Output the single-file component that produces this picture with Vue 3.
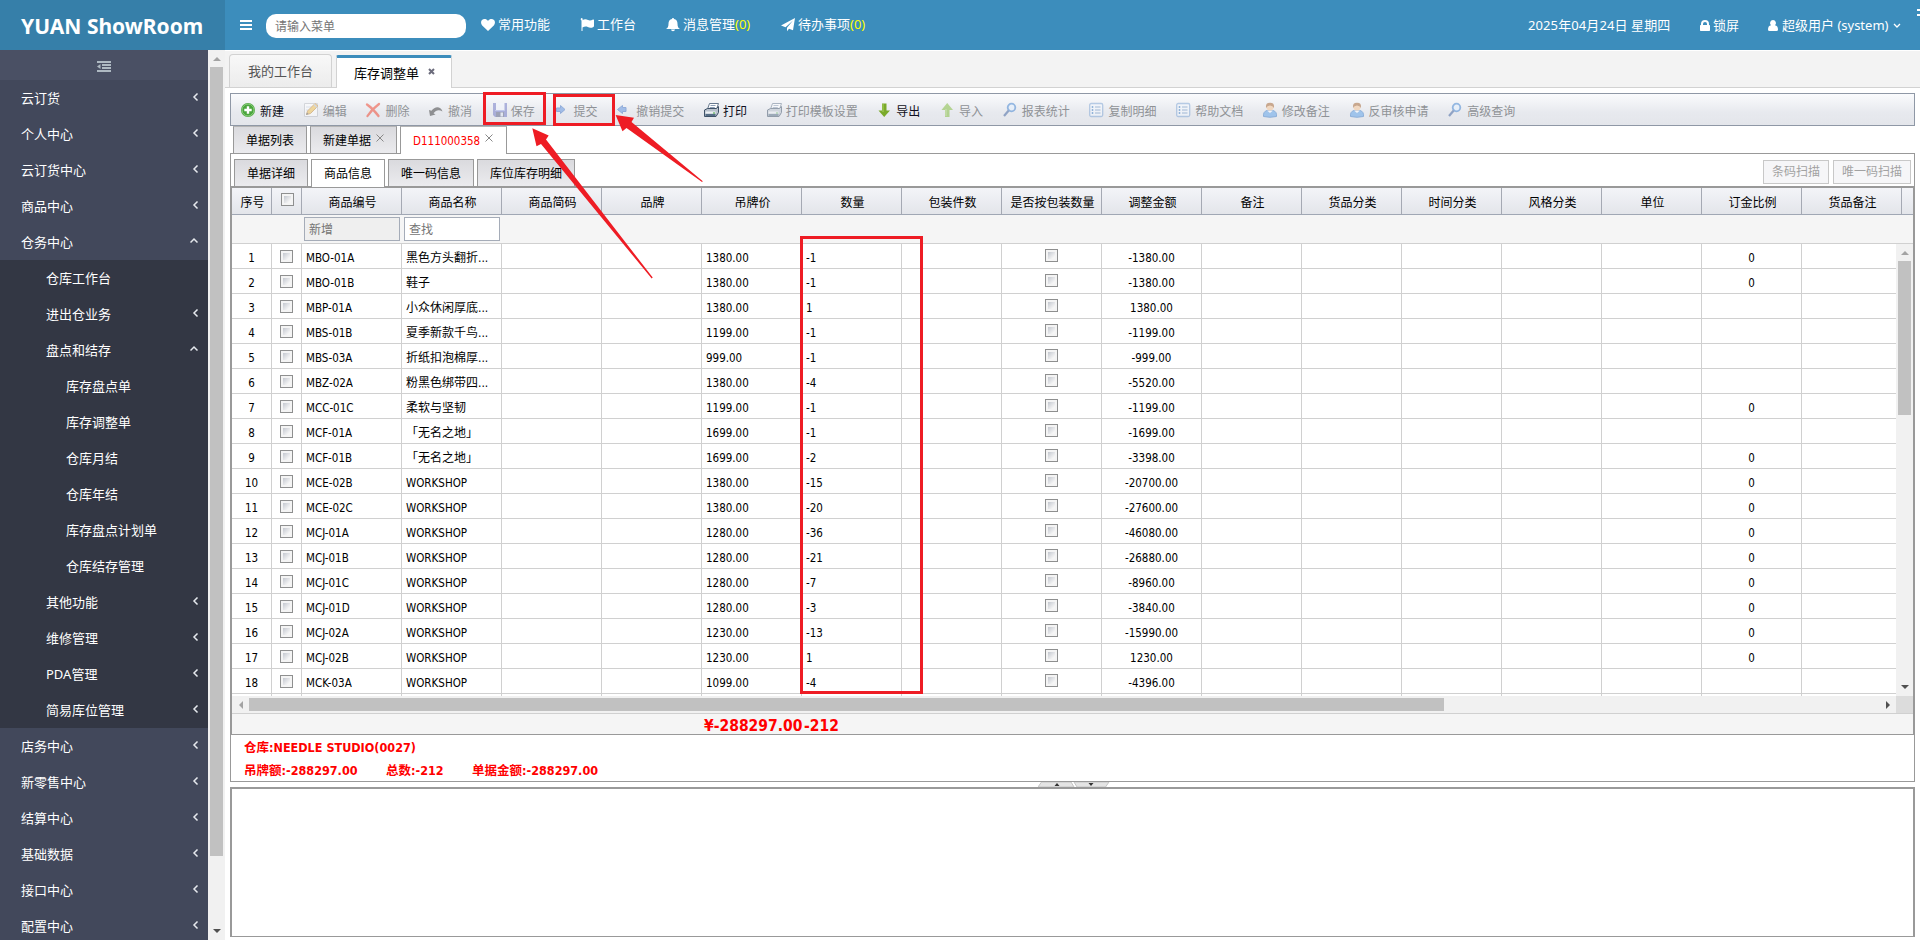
<template>
  <div class="app">
    <header class="topbar">
      <div class="logo">YUAN ShowRoom</div>
      <svg class="bars" viewBox="0 0 12 10"><path d="M0 0h12v2H0zM0 4h12v2H0zM0 8h12v2H0z" /></svg>
      <div class="menu-search">请输入菜单</div>
      <nav class="nav">
        <a v-for="n in navs" :key="n.text" :class="['nav-item', n.icon]">
          <svg class="nav-icon" viewBox="0 0 14 14"><path :d="glyphs[n.icon]" /></svg>
          <span>{{ n.text }}<em v-if="n.count">{{ n.count }}</em></span>
        </a>
      </nav>
      <div class="user-area">
        <span class="date">2025年04月24日 星期四</span>
        <span class="lock">
          <svg class="lock-icon" viewBox="0 0 10 12"><path fill-rule="evenodd" d="M1 5V4a4 4 0 0 1 8 0v1h.3q.7 0 .7.7v4.6q0 .7-.7.7H.7Q0 11 0 10.300V5.700Q0 5 .7 5zM3 5h4V4a2 2 0 0 0-4 0z" /></svg>
          锁屏
        </span>
        <span class="user">
          <svg class="user-icon" viewBox="0 0 10 12"><path d="M5 0a3 3 0 0 1 2 5.200Q10 5.800 10 9.500q0 1.500-1.500 1.500h-7Q0 11 0 9.500 0 5.800 3 5.200A3 3 0 0 1 5 0z" /></svg>
          超级用户 (system)
          <svg class="down-icon" viewBox="0 0 8 6"><path d="M1 1l3 3 3-3" /></svg>
        </span>
        <span class="edge-dots"></span>
      </div>
    </header>

    <div class="page">
      <aside class="sidebar">
        <div class="side-toggle">
          <svg viewBox="0 0 14 11"><path d="M0 0h14v2H0zM5 3h9v2H5zM5 6h9v2H5zM0 9h14v2H0zM0 5.500l3.500-2.500v5z" /></svg>
        </div>
        <ul class="menu">
          <li v-for="m in menus" :key="m.text" :class="['menu-item', 'level-' + m.level]">
            <span>{{ m.text }}</span>
            <svg v-if="m.arrow" :class="['chevron', m.arrow]" viewBox="0 0 8 8">
              <path :d="m.arrow === 'up' ? 'M0.500 5.500L4 2l3.500 3.500' : 'M5.500 0.500L2 4l3.500 3.500'" />
            </svg>
          </li>
        </ul>
      </aside>
      <div class="side-scroll">
        <i class="tri up"></i>
        <div class="side-thumb"></div>
        <i class="tri down dark"></i>
      </div>

      <main class="main">
        <div class="page-tabs">
          <div class="page-tab">我的工作台</div>
          <div class="page-tab active">
            库存调整单
            <svg viewBox="0 0 7 7"><path d="M1 1l5 5M6 1L1 6" /></svg>
          </div>
        </div>

        <div class="workspace">
          <div class="toolbar">
            <div v-for="t in tools" :key="t.text" :class="['tool', { disabled: !t.enabled }]">
              <svg class="tool-icon" viewBox="0 0 16 16" v-html="icons[t.icon]"></svg>
              <span>{{ t.text }}</span>
            </div>
          </div>

          <div class="doc-tabs">
            <div class="doc-tab">单据列表</div>
            <div class="doc-tab closable">新建单据<svg viewBox="0 0 8 8"><path d="M.5.5l7 7M7.500.5l-7 7" /></svg></div>
            <div class="doc-tab active">D111000358<svg viewBox="0 0 8 8"><path d="M.5.5l7 7M7.500.5l-7 7" /></svg></div>
          </div>

          <section class="detail">
            <div class="sub-bar">
              <div
                v-for="(s, i) in subTabs"
                :key="s"
                :class="['sub-tab', { active: i === 1 }]"
              >{{ s }}</div>
              <div class="scan-btns">
                <button>条码扫描</button>
                <button>唯一码扫描</button>
              </div>
            </div>

            <div class="grid">
              <div class="grid-head row">
                <div class="th">序号</div>
                <div class="th"><i class="check"></i></div>
                <div v-for="c in columns" :key="c" class="th">{{ c }}</div>
                <div class="th rest"></div>
              </div>
              <div class="filter">
                <div class="filter-input muted">新增</div>
                <div class="filter-input">查找</div>
              </div>
              <div class="grid-mid">
                <div class="grid-body">
                  <div v-for="(r, i) in rows" :key="i" class="row">
                    <div class="td center">{{ i + 1 }}</div>
                    <div class="td center"><i class="check"></i></div>
                    <div class="td">{{ r[0] }}</div>
                    <div :class="['td', { cjk: r[1] !== 'WORKSHOP' }]">{{ r[1] }}</div>
                    <div class="td"></div>
                    <div class="td"></div>
                    <div class="td">{{ r[2] }}</div>
                    <div class="td">{{ r[3] }}</div>
                    <div class="td"></div>
                    <div class="td center pack"><i class="check"></i></div>
                    <div class="td center">{{ r[4] }}</div>
                    <div v-for="k in 5" :key="k" class="td"></div>
                    <div class="td center">{{ r[5] ? '0' : '' }}</div>
                    <div class="td"></div>
                  </div>
                  <div class="row">
                    <div v-for="k in 18" :key="k" class="td"></div>
                  </div>
                </div>
                <div class="v-scroll">
                  <i class="tri up"></i>
                  <div class="v-thumb"></div>
                  <i class="tri down dark"></i>
                </div>
              </div>
              <div class="h-scroll">
                <i class="tri left"></i>
                <div class="h-thumb"></div>
                <i class="tri right dark"></i>
                <span class="corner"></span>
              </div>
              <div class="summary">
                <span class="sum-amount">¥-288297.00</span>
                <span class="sum-qty">-212</span>
              </div>
            </div>

            <div class="info">
              <p>仓库:NEEDLE STUDIO(0027)</p>
              <p>
                <span class="tag-total">吊牌额:-288297.00</span>
                <span class="count-total">总数:-212</span>
                <span>单据金额:-288297.00</span>
              </p>
            </div>
          </section>

          <div class="splitter">
            <svg viewBox="0 0 72 5">
              <path d="M3.500 0h29.500l3 5H0zM36 0h35l-3.500 5H39z" fill="#e4e4e4" stroke="#c4c4c4" />
              <path d="M19 1l2.500 3h-5zM53 4l2.500-3h-5z" fill="#333" />
            </svg>
          </div>
          <div class="lower-panel"></div>
        </div>
      </main>
    </div>

    <!-- 操作标注 -->
    <svg class="marks" viewBox="0 0 1920 940">
      <g fill="none" stroke="#ee1c24" stroke-width="3">
        <rect x="484.500" y="93.500" width="60" height="30" />
        <rect x="554.500" y="95.500" width="59" height="29" />
        <rect x="801.500" y="237.500" width="120" height="455" />
      </g>
      <g fill="#ee1c24">
        <path d="M532.300 128.300L548.700 135.600 546 139.500 652.700 277.500 651.700 278.500 541 144 536.500 146.300z" />
        <path d="M615.600 115L634 117.700 631.500 122 702.800 181.300 702 182 626.500 128 622.500 131.300z" />
      </g>
    </svg>
  </div>
</template>

<script setup>
const navs = [
  { icon: 'heart', text: '常用功能' },
  { icon: 'flag', text: '工作台' },
  { icon: 'bell', text: '消息管理', count: '(0)' },
  { icon: 'plane', text: '待办事项', count: '(0)' }
]

const glyphs = {
  heart: 'M7 13L1.200 7.400C-.3 5.800-.3 3.300 1 2 2.700.4 5.500.7 7 3 8.500.7 11.300.4 13 2c1.300 1.300 1.300 3.800-.2 5.400z',
  flag: 'M1.500 0a1.300 1.300 0 0 1 .9 2.200C4 1.200 6 .9 8 2c1.800.9 3.300.4 5-.5.600-.3 1 0 1 .5v6c0 .4-.2.7-.6.9-1.800 1-3.600 1.200-5.600.2-1.800-.9-3.600-.5-5.300.5V13h-1V2.400A1.300 1.300 0 0 1 1.500 0z',
  bell: 'M7 0c.6 0 1 .4 1 1.100 2.300.5 3.500 2.200 3.500 4.600 0 3 .9 4.300 2.500 5.300H0c1.600-1 2.500-2.300 2.500-5.300 0-2.400 1.200-4.100 3.500-4.600C6 .4 6.400 0 7 0zM5 11.500h4q-.2 1.800-2 1.800t-2-1.800z',
  plane: 'M14 0l-2 12.300-4-1.600L6 13.300V9.800L12 2.500 4.500 9.200 0 7.500z'
}

const menus = [
  { text: '云订货', level: 1, arrow: 'left' },
  { text: '个人中心', level: 1, arrow: 'left' },
  { text: '云订货中心', level: 1, arrow: 'left' },
  { text: '商品中心', level: 1, arrow: 'left' },
  { text: '仓务中心', level: 1, arrow: 'up' },
  { text: '仓库工作台', level: 2 },
  { text: '进出仓业务', level: 2, arrow: 'left' },
  { text: '盘点和结存', level: 2, arrow: 'up' },
  { text: '库存盘点单', level: 3 },
  { text: '库存调整单', level: 3 },
  { text: '仓库月结', level: 3 },
  { text: '仓库年结', level: 3 },
  { text: '库存盘点计划单', level: 3 },
  { text: '仓库结存管理', level: 3 },
  { text: '其他功能', level: 2, arrow: 'left' },
  { text: '维修管理', level: 2, arrow: 'left' },
  { text: 'PDA管理', level: 2, arrow: 'left' },
  { text: '简易库位管理', level: 2, arrow: 'left' },
  { text: '店务中心', level: 1, arrow: 'left' },
  { text: '新零售中心', level: 1, arrow: 'left' },
  { text: '结算中心', level: 1, arrow: 'left' },
  { text: '基础数据', level: 1, arrow: 'left' },
  { text: '接口中心', level: 1, arrow: 'left' },
  { text: '配置中心', level: 1, arrow: 'left' }
]

const tools = [
  { text: '新建', icon: 'add', enabled: true },
  { text: '编辑', icon: 'edit' },
  { text: '删除', icon: 'remove' },
  { text: '撤消', icon: 'undo' },
  { text: '保存', icon: 'save' },
  { text: '提交', icon: 'right' },
  { text: '撤销提交', icon: 'left' },
  { text: '打印', icon: 'print', enabled: true },
  { text: '打印模板设置', icon: 'print' },
  { text: '导出', icon: 'down', enabled: true },
  { text: '导入', icon: 'up' },
  { text: '报表统计', icon: 'search' },
  { text: '复制明细', icon: 'list' },
  { text: '帮助文档', icon: 'list' },
  { text: '修改备注', icon: 'person' },
  { text: '反审核申请', icon: 'person' },
  { text: '高级查询', icon: 'search' }
]

const icons = {
  add: '<circle cx="8" cy="8" r="7" fill="#4aa53d"/><circle cx="8" cy="8" r="6" fill="none" stroke="#8fd07f"/><path d="M6.800 4.300h2.400v2.500h2.500v2.400H9.200v2.500H6.800V9.200H4.300V6.800h2.500z" fill="#fff"/>',
  edit: '<path d="M1.500 1.500h13v13h-13z" fill="#fff" stroke="#b9bcc2"/><path d="M3 5h6M3 8h4" stroke="#c9d3e4"/><path d="M3.500 12.500l1-3.500L12 1.500l3 2.500-7.500 7.500z" fill="#f2c04a" stroke="#c48a3a"/><path d="M11 2.500l3 2.700" stroke="#b5bfce" stroke-width="1.500"/><path d="M3 13l1-2.500 1.500 1.600z" fill="#555"/>',
  remove: '<path d="M2 2.500Q8 6.500 13.500 14M14 2Q7 7 2.500 14" fill="none" stroke="#ef3b23" stroke-width="2.300" stroke-linecap="round"/>',
  undo: '<path d="M1 8l1 6 5.500-1.500-2-1.200C8 8 11 7.500 14.500 9.500 12.500 4 7 4 3.500 8.800z" fill="#333"/>',
  save: '<g transform="translate(1)"><path d="M1 1h14v14H3l-2-2z" fill="#6c74c4"/><path d="M4 1h8.500v7H4z" fill="#f3f6ff"/><path d="M3 8.500h10" stroke="#9aa7e6"/><path d="M4 10h8v5H4z" fill="#555d80"/><path d="M8.500 10.500h2.500v4H8.500z" fill="#dfe4f2"/></g>',
  right: '<path d="M2.500 6h4V3.500l4.500 4-4.500 4V9.500h-4z" fill="#5b8fe0" stroke="#3c6fc4"/>',
  left: '<path d="M10 5.500H6.500v-2l-5 4 5 4v-2H10z" fill="#5b8fe0" stroke="#3c6fc4"/>',
  print: '<g transform="translate(1)"><path d="M5.500 1.500h9l-2.500 7H3z" fill="#fff" stroke="#66788e"/><path d="M6.500 3.500h5M5.800 5.500h5" stroke="#8ea0b8"/><path d="M.5 8l3-1.500h9l2-2v6L12 14.500H.5z" fill="#b8c1cc" stroke="#3f5268"/><path d="M1.500 9.500h10v2h-10z" fill="#eef2f6"/><path d="M1.500 13h10" stroke="#35506e" stroke-width="1.500"/><path d="M9 11h2" stroke="#3fa53a"/></g>',
  down: '<path d="M6 1.500h4.500v7H14L8.200 15 2.500 8.500H6z" fill="#7aaa2a"/><path d="M7 2v8" stroke="#a9cf63"/>',
  up: '<path d="M6 15h4.500V8H14L8.200 1 2.500 8H6z" fill="#7dbb35"/><path d="M7 14V7" stroke="#b2d980"/>',
  search: '<circle cx="9.500" cy="5.500" r="3.800" fill="#e3f0ff" stroke="#3b7fd0" stroke-width="1.800"/><path d="M6.700 8.500L2 14" stroke="#3b5f9d" stroke-width="2.200"/>',
  list: '<rect x="1.700" y="1.500" width="13" height="13" rx="1.500" fill="#f4f9ff" stroke="#7ba3d4" stroke-width="1.300"/><path d="M4.500 4v8" stroke="#3e7ec2" stroke-width="1.500" stroke-dasharray="2 1"/><path d="M7 5h5.500M7 8h5.500M7 11h5.500" stroke="#5b86bb"/>',
  person: '<path d="M1.500 14.500Q1 9.500 5 8.500h6q4 1 3.500 6-6.500 1.500-13 0z" fill="#5aa0ea" stroke="#3678c6"/><path d="M5 8.500l3 2.500 3-2.500" fill="#fff"/><circle cx="8" cy="5" r="3.500" fill="#f5c391"/><path d="M4.200 6Q3 .7 8 .7T11.800 6Q11 3.500 8 3.500T4.200 6z" fill="#a2602b"/>'
}

const subTabs = ['单据详细', '商品信息', '唯一码信息', '库位库存明细']

const columns = [
  '商品编号', '商品名称', '商品简码', '品牌', '吊牌价', '数量', '包装件数', '是否按包装数量',
  '调整金额', '备注', '货品分类', '时间分类', '风格分类', '单位', '订金比例', '货品备注'
]

// 编号, 名称, 吊牌价, 数量, 调整金额, 是否显示订金比例
const rows = [
  ['MBO-01A', '黑色方头翻折...', '1380.00', '-1', '-1380.00', true],
  ['MBO-01B', '鞋子', '1380.00', '-1', '-1380.00', true],
  ['MBP-01A', '小众休闲厚底...', '1380.00', '1', '1380.00', false],
  ['MBS-01B', '夏季新款千鸟...', '1199.00', '-1', '-1199.00', false],
  ['MBS-03A', '折纸扣泡棉厚...', '999.00', '-1', '-999.00', false],
  ['MBZ-02A', '粉黑色绑带四...', '1380.00', '-4', '-5520.00', false],
  ['MCC-01C', '柔软与坚韧', '1199.00', '-1', '-1199.00', true],
  ['MCF-01A', '「无名之地」', '1699.00', '-1', '-1699.00', false],
  ['MCF-01B', '「无名之地」', '1699.00', '-2', '-3398.00', true],
  ['MCE-02B', 'WORKSHOP', '1380.00', '-15', '-20700.00', true],
  ['MCE-02C', 'WORKSHOP', '1380.00', '-20', '-27600.00', true],
  ['MCJ-01A', 'WORKSHOP', '1280.00', '-36', '-46080.00', true],
  ['MCJ-01B', 'WORKSHOP', '1280.00', '-21', '-26880.00', true],
  ['MCJ-01C', 'WORKSHOP', '1280.00', '-7', '-8960.00', true],
  ['MCJ-01D', 'WORKSHOP', '1280.00', '-3', '-3840.00', true],
  ['MCJ-02A', 'WORKSHOP', '1230.00', '-13', '-15990.00', true],
  ['MCJ-02B', 'WORKSHOP', '1230.00', '1', '1230.00', true],
  ['MCK-03A', 'WORKSHOP', '1099.00', '-4', '-4396.00', false]
]
</script>

<style>
body {
  margin: 0;
  overflow: hidden;
}
</style>

<style scoped>
.app {
  position: relative;
  display: flex;
  flex-direction: column;
  width: 1920px;
  height: 940px;
  overflow: hidden;
  background: #fff;
  font-family: 'Noto Sans', 'Noto Sans CJK SC', sans-serif;
  font-size: 13px;
  white-space: nowrap;
}

.app * {
  box-sizing: border-box;
}

/* 顶栏 */
.topbar {
  display: flex;
  align-items: center;
  flex: none;
  height: 50px;
  background: #3c8dbc;
  color: #fff;
}

.logo {
  width: 225px;
  height: 50px;
  padding-left: 21px;
  background: #367fa9;
  font-size: 21px;
  font-weight: 700;
  line-height: 52px;
}

.bars {
  width: 12px;
  height: 10px;
  margin: 0 14px 0 15px;
  fill: #fff;
}

.menu-search {
  width: 200px;
  height: 24px;
  margin-top: 2px;
  padding-left: 9px;
  border-radius: 10px;
  background: #fff;
  color: #757575;
  font-size: 12px;
  line-height: 25px;
}

.nav {
  display: flex;
  margin-left: 15px;
}

.nav-item {
  display: flex;
  align-items: center;
  gap: 3px;
  line-height: 18px;
  padding-bottom: 2px;
}

.nav-item.heart {
  width: 99px;
}

.nav-item.flag {
  width: 86px;
}

.nav-item.bell {
  width: 115px;
}

.nav-item em {
  color: #ff0;
  font-style: normal;
}

.nav-icon {
  width: 14px;
  height: 14px;
  margin-top: 2px;
  fill: #fff;
}

.user-area {
  display: flex;
  align-items: center;
  align-self: stretch;
  margin-left: auto;
  padding-bottom: 2px;
}

.date {
  width: 172px;
  letter-spacing: 0.1px;
}

.lock {
  display: flex;
  align-items: center;
  gap: 3px;
  width: 68px;
}

.user {
  display: flex;
  align-items: center;
  gap: 4px;
  width: 149px;
}

.lock-icon,
.user-icon {
  width: 10px;
  height: 12px;
  margin-top: 3px;
  fill: #fff;
}

.down-icon {
  width: 8px;
  height: 6px;
  margin: 4px 0 0 1px;
  fill: none;
  stroke: #fff;
  stroke-width: 1.3;
}

.edge-dots {
  align-self: flex-start;
  width: 3px;
  height: 7px;
  margin-top: 9px;
  border: solid #fff;
  border-width: 2px 0;
}

/* 左侧菜单 */
.page {
  display: flex;
  flex: 1;
  min-height: 0;
}

.sidebar {
  width: 208px;
  background: #42485b;
  overflow: hidden;
}

.side-toggle {
  display: flex;
  align-items: center;
  justify-content: center;
  height: 30px;
  padding-top: 3px;
  background: #4a5064;
}

.side-toggle svg {
  width: 14px;
  height: 11px;
  fill: #aeb9c2;
}

.menu {
  margin: 0;
  padding: 0;
  list-style: none;
}

.menu-item {
  display: flex;
  align-items: center;
  justify-content: space-between;
  height: 36px;
  padding: 0 10px 2px 21px;
  color: #fff;
}

.menu-item.level-2,
.menu-item.level-3 {
  background: #333744;
}

.menu-item.level-2 {
  padding-left: 46px;
}

.menu-item.level-3 {
  padding-left: 66px;
}

.chevron {
  width: 8px;
  height: 8px;
  fill: none;
  stroke: #e6e9ee;
  stroke-width: 1.5;
}

.chevron.left {
  margin-right: -2px;
}

/* 滚动条 */
.tri {
  flex: none;
  width: 0;
  height: 0;
  border: 4px solid transparent;
}

.tri.up {
  border-top: 0;
  border-bottom-color: #a3a3a3;
}

.tri.down {
  border-bottom: 0;
  border-top-color: #505050;
}

.tri.left {
  border-left: 0;
  border-right-color: #a3a3a3;
}

.tri.right {
  border-right: 0;
  border-left-color: #505050;
}

.side-scroll {
  display: flex;
  flex-direction: column;
  align-items: center;
  width: 17px;
  padding: 7px 0 7px;
  background: #f1f1f1;
}

.side-thumb {
  width: 13px;
  height: 789px;
  margin: 6px 0 auto;
  background: #c1c1c1;
}

.main {
  display: flex;
  flex: 1;
  flex-direction: column;
  min-width: 0;
}

/* 页签 */
.page-tabs {
  display: flex;
  align-items: flex-end;
  flex: none;
  gap: 4px;
  height: 38px;
  padding-left: 4px;
  border-top: 1px solid #fff;
  border-bottom: 1px solid #d2d2d2;
  background: #f3f3f3;
}

.page-tab {
  width: 103px;
  height: 33px;
  border: 1px solid #d2d2d2;
  border-bottom: 0;
  border-radius: 4px 4px 0 0;
  background: linear-gradient(#f8f8f8, #ececec);
  color: #555;
  line-height: 32px;
  text-align: center;
}

.page-tab.active {
  display: flex;
  align-items: center;
  gap: 9px;
  width: 116px;
  height: 33px;
  margin-bottom: -1px;
  padding: 0 0 1px 17px;
  border-top: 3px solid #3c8dbc;
  border-radius: 2px 2px 0 0;
  background: #fff;
  color: #000;
  line-height: 28px;
}

.page-tab svg {
  width: 7px;
  height: 7px;
  margin-bottom: 2px;
  fill: none;
  stroke: #6b6b7b;
  stroke-width: 2;
}

.workspace {
  display: flex;
  flex: 1;
  flex-direction: column;
  padding: 5px 5px 3px;
  font-family: 'DejaVu Sans Condensed', 'Noto Sans CJK SC', sans-serif;
  font-size: 12px;
}

.toolbar {
  display: flex;
  align-items: center;
  flex: none;
  gap: 18.7px;
  height: 33px;
  padding: 1px 0 0 9px;
  border: 1px solid #8f98a6;
  background: linear-gradient(#fafbfd, #e7e9ee 60%, #e4e6eb);
  color: #101020;
}

.tool {
  display: flex;
  align-items: center;
  gap: 4px;
}

.tool-icon {
  width: 16px;
  height: 16px;
  overflow: visible;
}

.tool.disabled {
  color: #8f9296;
}

.tool.disabled .tool-icon {
  opacity: 0.5;
}

.doc-tabs {
  display: flex;
  flex: none;
  gap: 3px;
  height: 27px;
  padding-left: 3px;
}

.doc-tab {
  display: flex;
  width: 74px;
  padding: 0 12px;
  border: 1px solid #999;
  border-top-color: #b5b5b5;
  border-bottom: 0;
  background: linear-gradient(#dadade, #ebebee);
  line-height: 29px;
}

.doc-tab.closable {
  width: 87px;
}

.doc-tab svg {
  flex: none;
  width: 8px;
  height: 8px;
  margin: 7px 0 0 5px;
  fill: none;
  stroke: #888;
}

.doc-tab.active {
  z-index: 1;
  width: 107px;
  height: 28px;
  background: #fff;
  color: #f00;
  font-size: 11.5px;
}

.detail {
  display: flex;
  flex: none;
  flex-direction: column;
  height: 629px;
  border: 1px solid #999;
}

.sub-bar {
  display: flex;
  gap: 3px;
  height: 32px;
  padding: 5px 3px 0 3px;
}

.sub-tab {
  padding: 0 12px;
  border: 1px solid #999;
  border-bottom: 0;
  background: linear-gradient(#dadade, #ebebee);
  line-height: 28px;
}

.sub-tab.active {
  z-index: 1;
  height: 28px;
  background: #fff;
}

.scan-btns {
  display: flex;
  gap: 4px;
  margin-left: auto;
  padding-top: 1px;
}

.scan-btns button {
  height: 24px;
  padding: 0 8px;
  border: 1px solid #c8c8c8;
  background: #f6f6f8;
  color: #a2a2a2;
  font: inherit;
  line-height: 22px;
}

/* 表格 */
.grid {
  margin: 0 -1px;
  border: 2px solid #999;
  border-bottom-width: 1px;
}

.row {
  display: grid;
  grid-template-columns: 40px 30px repeat(16, 100px) 1fr;
}

.grid-head {
  height: 27px;
  overflow: hidden;
  border-bottom: 1px solid #a0a7b4;
  background: linear-gradient(#f3f4f8, #e3e5ea);
}

.th {
  display: flex;
  align-items: center;
  justify-content: center;
  height: 26px;
  padding-left: 2px;
  border-right: 1px solid #a5a9b3;
  color: #000;
}

.th .check {
  margin: -3px 0 0;
}

.th.rest {
  border-right: 0;
}

.filter {
  display: flex;
  gap: 4px;
  height: 29px;
  padding: 2px 0 0 72px;
  border-bottom: 1px solid #d0d0d0;
  background: #f5f5f5;
}

.filter-input {
  width: 96px;
  height: 24px;
  padding-left: 4px;
  border: 1px solid #a5acb8;
  background: #fff;
  color: #757575;
  line-height: 24px;
}

.filter-input.muted {
  background: #efefef;
}

.grid-mid {
  display: flex;
  height: 452px;
}

.grid-body {
  width: 1664px;
  overflow: hidden;
}

.td {
  height: 25px;
  padding: 1px 0 0 4px;
  border-right: 1px solid #d0d0d0;
  border-bottom: 1px solid #d0d0d0;
  color: #000;
  font-size: 11.5px;
  line-height: 26px;
}

.td.cjk {
  font-size: 12px;
}

.td.center {
  display: flex;
  align-items: flex-start;
  justify-content: center;
  padding-left: 0;
}

.td .check {
  margin-top: 5px;
}

.td.pack .check {
  margin-top: 4px;
}

.check {
  width: 13px;
  height: 13px;
  border: 1px solid #8e8f8f;
  background: linear-gradient(135deg, #c3c7cf, #f6f6f6 80%) content-box, #f4f4f4;
  padding: 2px;
}

.v-scroll {
  display: flex;
  flex-direction: column;
  align-items: center;
  width: 17px;
  padding: 7px 0;
  background: #f1f1f1;
}

.v-thumb {
  width: 13px;
  height: 154px;
  margin: 6px 0 auto;
  background: #c1c1c1;
}

.h-scroll {
  display: flex;
  align-items: center;
  height: 17px;
  padding-left: 7px;
  background: #f1f1f1;
}

.h-thumb {
  width: 1195px;
  height: 13px;
  margin: 0 auto 0 6px;
  background: #c1c1c1;
}

.corner {
  width: 17px;
  height: 17px;
  margin-left: 6px;
  background: #dcdcdc;
}

.summary {
  display: flex;
  height: 21px;
  padding-left: 472px;
  border-top: 1px solid #d0d0d0;
  background: #f5f5f5;
  color: #f00;
  font-size: 15.5px;
  font-weight: 700;
  line-height: 24px;
}

.sum-amount {
  width: 100px;
}

.info {
  padding: 0 0 0 13px;
  color: #f00;
  font-size: 12.5px;
  font-weight: 700;
}

.info p {
  display: flex;
  height: 23px;
  margin: 0;
  line-height: 25px;
}

.tag-total {
  width: 142px;
}

.count-total {
  width: 86px;
}

.splitter {
  display: flex;
  justify-content: center;
  flex: none;
  height: 5px;
}

.splitter svg {
  width: 72px;
  height: 5px;
  margin-left: 2px;
}

.lower-panel {
  flex: 1;
  border: 2px solid #999;
  border-bottom-width: 1px;
}

/* 标注覆盖在界面上层 */
.marks {
  position: absolute;
  z-index: 5;
  top: 0;
  left: 0;
  width: 1920px;
  height: 940px;
  pointer-events: none;
}
</style>
